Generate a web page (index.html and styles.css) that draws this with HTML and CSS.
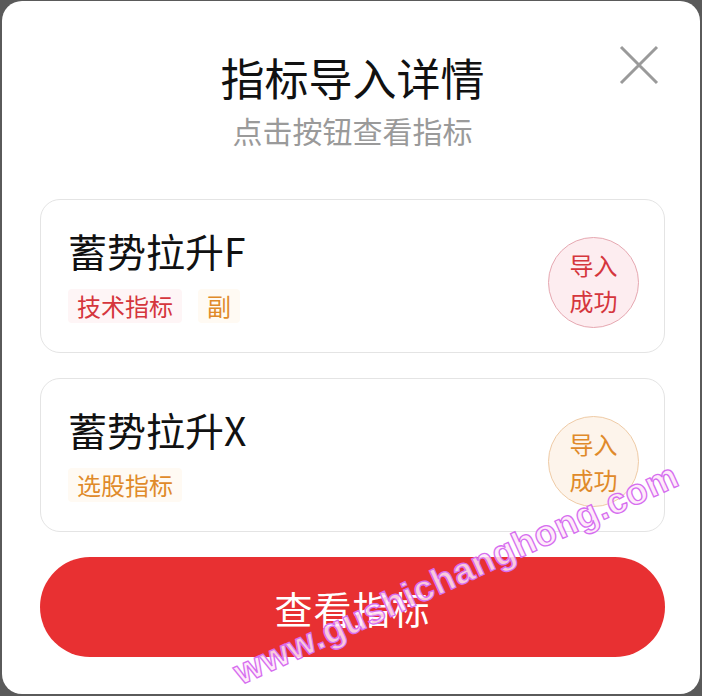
FILE: index.html
```html
<!DOCTYPE html>
<html lang="zh-CN">
<head>
<meta charset="utf-8">
<title>指标导入详情</title>
<link rel="stylesheet" href="styles.css">
</head>
<body>
<div class="modal">
  <button class="close" aria-label="关闭">
    <svg width="40" height="40" viewBox="0 0 40 40"><path d="M2 2 L38 38 M38 2 L2 38" stroke="#9a9a9a" stroke-width="3" fill="none"/></svg>
  </button>
  <header class="head">
    <h1 class="title">指标导入详情</h1>
    <p class="sub">点击按钮查看指标</p>
  </header>
  <div class="list">
    <div class="card">
      <div class="info">
        <div class="name">蓄势拉升F</div>
        <div class="tags">
          <span class="tag tag-red">技术指标</span>
          <span class="tag tag-orange">副</span>
        </div>
      </div>
      <div class="badge badge-red">导入<br>成功</div>
    </div>
    <div class="card">
      <div class="info">
        <div class="name">蓄势拉升X</div>
        <div class="tags">
          <span class="tag tag-orange">选股指标</span>
        </div>
      </div>
      <div class="badge badge-orange">导入<br>成功</div>
    </div>
  </div>
  <button class="cta">查看指标</button>
</div>
<div class="watermark">www.gushichanghong.com</div>
</body>
</html>
```
FILE: styles.css
```css
* { box-sizing: border-box; }
html, body { margin: 0; padding: 0; }
body {
  width: 702px;
  height: 696px;
  background: #5a5a5a;
  font-family: "Noto Sans CJK SC", "Noto Sans", sans-serif;
  position: relative;
  overflow: hidden;
}
.modal {
  position: relative;
  margin: 1px 2px 0 2px;
  height: 693px;
  background: #fff;
  border-radius: 20px;
  padding: 50px 35px 0 38px;
  display: flex;
  flex-direction: column;
}
.close {
  position: absolute;
  top: 44px;
  right: 41px;
  width: 40px;
  height: 40px;
  padding: 0;
  border: 0;
  background: none;
}
.close svg { display: block; }
.head { text-align: center; }
.title {
  margin: 0;
  font-size: 44px;
  line-height: 52px;
  font-weight: 400;
  color: #111;
}
.sub {
  margin: 9px 0 0;
  font-size: 30px;
  line-height: 36px;
  color: #9a9a9a;
}
.list {
  margin-top: 51px;
  display: flex;
  flex-direction: column;
  gap: 25px;
}
.card {
  height: 154px;
  border: 1px solid #e4e4e4;
  border-radius: 20px;
  padding: 28px 25px 0 27px;
  display: flex;
  justify-content: space-between;
  align-items: flex-start;
}
.name {
  font-size: 39px;
  line-height: 44px;
  color: #111;
}
.tags {
  margin-top: 17px;
  display: flex;
  gap: 16px;
}
.tag {
  font-size: 24px;
  line-height: 34px;
  padding: 0 9px;
  border-radius: 4px;
}
.tag-red { color: #d5363d; background: #fef5f6; }
.tag-orange { color: #e08a2a; background: #fffaf3; }
.badge {
  margin-top: 9px;
  width: 91px;
  height: 91px;
  border-radius: 50%;
  display: flex;
  align-items: center;
  justify-content: center;
  text-align: center;
  font-size: 24px;
  line-height: 36px;
}
.badge-red { color: #d5363d; background: #fdedf0; border: 1px solid #e6a8b1; }
.badge-orange { color: #e08a2a; background: #fdf4eb; border: 1px solid #efcba6; }
.cta {
  margin-top: 25px;
  height: 100px;
  border: 0;
  border-radius: 50px;
  background: #e83032;
  color: #fff;
  font-family: "Noto Sans CJK SC", "Noto Sans", sans-serif;
  font-size: 38px;
  letter-spacing: 1px;
}
.watermark {
  position: absolute;
  left: 190px;
  top: 658px;
  transform-origin: 0 100%;
  transform: translateX(52px) rotate(-24.5deg);
  font-family: "Liberation Sans", Arial, sans-serif;
  font-weight: 700;
  font-size: 36px;
  line-height: 30px;
  letter-spacing: 0.8px;
  white-space: nowrap;
  color: rgba(255, 232, 250, 0.85);
  -webkit-text-stroke: 1.3px #d66ef0;
}
```
